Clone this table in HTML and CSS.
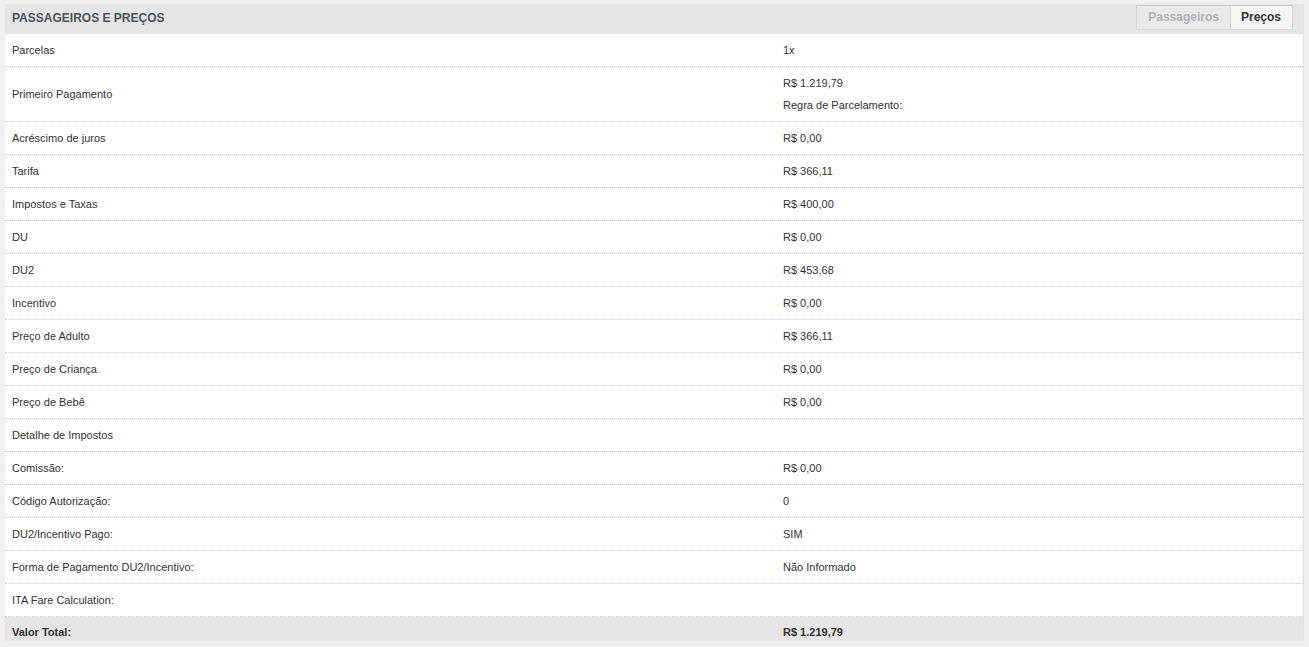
FILE: index.html
```html
<!DOCTYPE html>
<html lang="pt-BR">
<head>
<meta charset="utf-8">
<title>Passageiros e Preços</title>
<link rel="stylesheet" href="styles.css">
</head>
<body>
<div class="panel">
  <div class="panel-head">
    <h2 class="panel-title">PASSAGEIROS E PREÇOS</h2>
    <div class="tabs">
      <span class="tab">Passageiros</span>
      <span class="tab tab-active">Preços</span>
    </div>
  </div>
  <div class="rows">
    <div class="row"><div class="label">Parcelas</div><div class="value">1x</div></div>
    <div class="row"><div class="label">Primeiro Pagamento</div><div class="value"><div>R$ 1.219,79</div><div class="sub">Regra de Parcelamento:</div></div></div>
    <div class="row"><div class="label">Acréscimo de juros</div><div class="value">R$ 0,00</div></div>
    <div class="row"><div class="label">Tarifa</div><div class="value">R$ 366,11</div></div>
    <div class="row"><div class="label">Impostos e Taxas</div><div class="value">R$ 400,00</div></div>
    <div class="row"><div class="label">DU</div><div class="value">R$ 0,00</div></div>
    <div class="row"><div class="label">DU2</div><div class="value">R$ 453,68</div></div>
    <div class="row"><div class="label">Incentivo</div><div class="value">R$ 0,00</div></div>
    <div class="row"><div class="label">Preço de Adulto</div><div class="value">R$ 366,11</div></div>
    <div class="row"><div class="label">Preço de Criança</div><div class="value">R$ 0,00</div></div>
    <div class="row"><div class="label">Preço de Bebê</div><div class="value">R$ 0,00</div></div>
    <div class="row"><div class="label">Detalhe de Impostos</div><div class="value"></div></div>
    <div class="row"><div class="label">Comissão:</div><div class="value">R$ 0,00</div></div>
    <div class="row"><div class="label">Código Autorização:</div><div class="value">0</div></div>
    <div class="row"><div class="label">DU2/Incentivo Pago:</div><div class="value">SIM</div></div>
    <div class="row"><div class="label">Forma de Pagamento DU2/Incentivo:</div><div class="value">Não Informado</div></div>
    <div class="row"><div class="label">ITA Fare Calculation:</div><div class="value"></div></div>
    <div class="row row-total"><div class="label">Valor Total:</div><div class="value">R$ 1.219,79</div></div>
  </div>
</div>
</body>
</html>
```

FILE: styles.css
```css
html, body {
  margin: 0;
  padding: 0;
}
body {
  background: #efefef;
  padding: 4px 5px 6px 5px;
  font-family: "Liberation Sans", Arial, sans-serif;
  font-size: 11px;
  color: #333;
}
.panel {
  background: #fff;
  border-right: 1px solid #e2e2e2;
}
.panel-head {
  background: #e5e5e5;
  height: 30px;
  display: flex;
  align-items: flex-start;
  justify-content: space-between;
  padding: 0 10px 0 7px;
}
.panel-title {
  margin: 0;
  font-size: 12px;
  font-weight: bold;
  color: #4d5459;
  line-height: 27px;
  padding-top: 1px;
}
.tabs {
  display: flex;
  margin-top: 1px;
  border: 1px solid #d6d6d6;
  border-top-color: #c9c9c9;
  border-bottom-color: #dcdcdc;
}
.tab {
  font-size: 12px;
  font-weight: bold;
  line-height: 23px;
  padding: 0 11px 0 11px;
  color: #b2b2b2;
  background: #e9e9e9;
}
.tab-active {
  background: #f5f5f5;
  color: #333;
  border-left: 1px solid #d6d6d6;
  padding: 0 11px 0 10px;
}
.rows {
  display: flex;
  flex-direction: column;
}
.row {
  display: grid;
  grid-template-columns: 771px 1fr;
  border-bottom: 1px dotted #cfcfcf;
  line-height: 16px;
}
.label, .value {
  padding: 8px 7px 8px 7px;
}
.label {
  display: flex;
  align-items: center;
}
.value .sub {
  margin-top: 6px;
}
.row-total {
  background: #e5e5e5;
  font-weight: bold;
  border-bottom: none;
}
.row-total .label, .row-total .value {
  padding: 7px 7px 1px 7px;
}
```
